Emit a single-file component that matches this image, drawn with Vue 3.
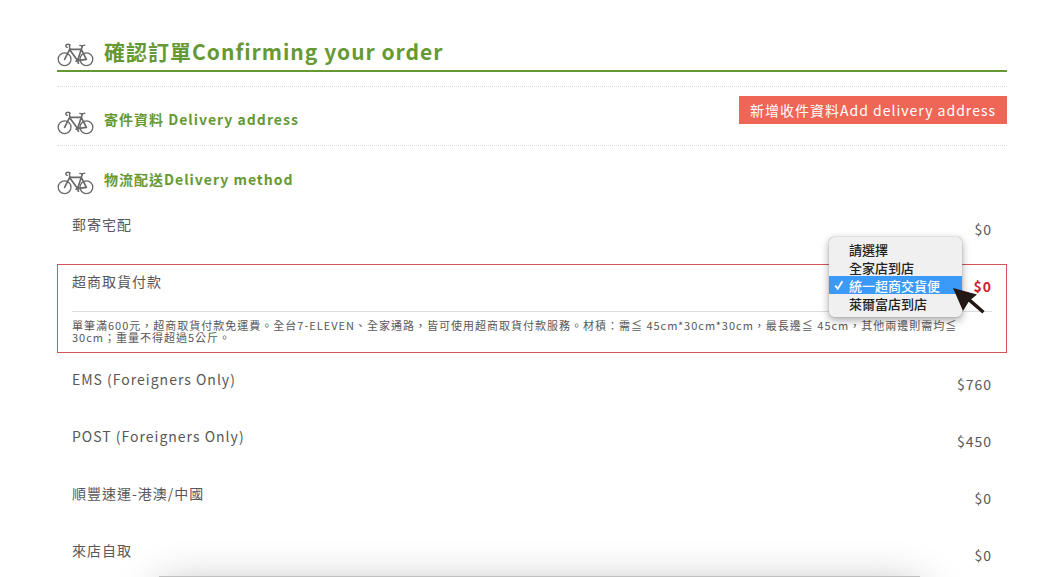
<script setup>
import { computed, ref } from 'vue'

const storeOptions = ['請選擇', '全家店到店', '統一超商交貨便', '萊爾富店到店']
const store = ref('統一超商交貨便')
const optionHeight = 18

const checkTop = computed(() => storeOptions.indexOf(store.value) * optionHeight + 'px')

const methods = [
  { name: '郵寄宅配', price: '$0' },
  {
    name: '超商取貨付款',
    price: '$0',
    active: true,
    note: '單筆滿600元，超商取貨付款免運費。全台7-ELEVEN、全家通路，皆可使用超商取貨付款服務。材積：需≦ 45cm*30cm*30cm，最長邊≦ 45cm，其他兩邊則需均≦ 30cm；重量不得超過5公斤。',
  },
  { name: 'EMS (Foreigners Only)', price: '$760' },
  { name: 'POST (Foreigners Only)', price: '$450' },
  { name: '順豐速運-港澳/中國', price: '$0' },
  { name: '來店自取', price: '$0' },
]
</script>

<template>
  <main class="checkout">
    <!-- Shared bicycle drawing -->
    <svg class="sprite" aria-hidden="true">
      <symbol id="bike" viewBox="0 0 37 24">
        <g fill="none" stroke="#6a6a6c" stroke-linecap="round" stroke-linejoin="round">
          <circle cx="7.6" cy="16.3" r="6.4" stroke-width="1.3" />
          <circle cx="29.4" cy="16.3" r="6.4" stroke-width="1.3" />
          <path d="M7.6 16.3 12.9 5.8M13.2 6.4H24.4M13.2 7.4 20.6 17.6M25.2 3.4 20.6 17.6M24.4 6.6 29.4 16.3 20.6 17.6" stroke-width="1.7" />
          <path d="M12.9 5.8 12.4 2.6M9.2 1.8C11 .8 13.4 1.4 13 2.6M9.2 1.8C8.2 3 9 4.4 10.4 4.4M22.8 2.4C24.4 3.2 26 2.8 27.8 2.2" stroke-width="1.4" />
          <path d="M19.2 18.2 22 17M20.6 17.6 21.4 20.2" stroke-width="1.8" />
        </g>
      </symbol>
    </svg>

    <header class="page-head">
      <svg class="bike" aria-hidden="true"><use href="#bike" /></svg>
      <h1>確認訂單Confirming your order</h1>
    </header>

    <section class="section address">
      <svg class="bike" aria-hidden="true"><use href="#bike" /></svg>
      <h2>寄件資料 Delivery address</h2>
      <button type="button" class="btn-add">新增收件資料Add delivery address</button>
    </section>

    <section class="section">
      <svg class="bike" aria-hidden="true"><use href="#bike" /></svg>
      <h2>物流配送Delivery method</h2>
    </section>

    <ul class="methods">
      <li v-for="m in methods" :key="m.name" class="method" :class="{ active: m.active }">
        <div class="method-row">
          <span class="method-name">{{ m.name }}</span>
          <span class="method-price">{{ m.price }}</span>
        </div>
        <p v-if="m.note" class="method-note">{{ m.note }}</p>

        <!-- Opened store drop-down -->
        <div v-if="m.active" class="store-menu">
          <select v-model="store" class="store-list" size="4" aria-label="超商取貨付款">
            <option v-for="o in storeOptions" :key="o" :value="o">{{ o }}</option>
          </select>
          <div class="check-col">
            <svg class="check" :style="{ top: checkTop }" viewBox="0 0 10 18" aria-hidden="true">
              <path d="M1.2 9.6 3.8 12.8 8.4 5.2" fill="none" stroke="#fff" stroke-width="1.8" />
            </svg>
          </div>
          <svg class="pointer" viewBox="0 0 34 28" aria-hidden="true">
            <path d="M1 1 25 7.6 19.2 12.2 32.6 24 30.4 26.4 16.6 14.8 11 24Z" fill="#231815" />
          </svg>
        </div>
      </li>
    </ul>

    <div class="sheet-edge"></div>
  </main>
</template>

<style>
body {
  margin: 0;
  background: #fff;
}
</style>

<style scoped>
.checkout {
  padding: 36px 50px 0 57px;
  color: #595757;
  font-family: 'Noto Sans CJK TC', 'Noto Sans', sans-serif;
  font-size: 14px;
  line-height: 20px;
  letter-spacing: 1px;
}

.sprite {
  position: absolute;
  width: 0;
  height: 0;
}

h1,
h2 {
  margin: 0;
  color: #669933;
  font-weight: 700;
}

h1 {
  font-size: 21px;
  line-height: 30px;
}

h2 {
  font-size: 14px;
  line-height: 20px;
}

.bike {
  width: 37px;
  height: 24px;
  margin-right: 10px;
  flex-shrink: 0;
}

/* ── Headings ───────────────────────────────────────────────── */
.page-head {
  display: flex;
  height: 34px;
  margin-bottom: 14px;
  border-bottom: 2px solid #669933;
}

.page-head .bike {
  margin-top: 7px;
}

.section {
  display: flex;
  box-sizing: border-box;
  height: 60px;
  padding-top: 23px;
}

.section .bike {
  margin-top: 2px;
}

.address {
  padding-top: 22px;
  border-top: 1px dotted #d8d8d8;
  border-bottom: 1px dotted #d8d8d8;
}

.btn-add {
  height: 28px;
  margin: -13px 0 0 auto;
  padding: 0 11px;
  border: 0;
  background: #ef6657;
  color: #fff;
  font: inherit;
  letter-spacing: inherit;
}

/* ── Delivery methods ───────────────────────────────────────── */
.methods {
  margin: 1px 0 0;
  padding: 0;
  list-style: none;
}

.method {
  padding: 0 15px;
}

.method-row {
  display: flex;
  justify-content: space-between;
  box-sizing: border-box;
  height: 57px;
  padding-top: 7px;
}

.method-price {
  padding-top: 5px;
}

.method.active {
  position: relative;
  margin-bottom: 9px;
  padding: 0 14px;
  border: 1px solid #d4545c;
  border-left-color: #669933;
}

.active .method-row {
  height: 47px;
  padding-top: 6px;
  border-bottom: 1px solid #ddd;
}

.active .method-price {
  color: #d02030;
  font-weight: 700;
}

.method-note {
  margin: 0;
  padding: 7px 0 9px;
  font-size: 11px;
  line-height: 12px;
}

/* ── Store menu ─────────────────────────────────────────────── */
.store-menu {
  position: absolute;
  top: -28px;
  right: 44px;
  box-sizing: border-box;
  width: 133px;
  padding: 3px 0 5px;
  border-radius: 5px;
  background: #f0f0f0;
  box-shadow: 0 0 1px rgba(0, 0, 0, 0.5), 0 3px 8px rgba(0, 0, 0, 0.35);
}

.store-list {
  display: block;
  width: 100%;
  height: 72px;
  padding: 0;
  border: 0;
  outline: 0;
  overflow: hidden;
  background: transparent;
  color: #222;
  font-family: inherit;
  font-size: 13px;
  font-weight: 500;
  line-height: 18px;
}

.store-list option {
  box-sizing: border-box;
  height: 18px;
  min-height: 18px;
  padding: 0 0 0 20px;
  font-weight: 500;
}

.store-list option:checked {
  background: linear-gradient(#3b99f7, #3b99f7);
  -webkit-text-fill-color: #fff;
}

.check-col {
  position: absolute;
  top: 3px;
  left: 5px;
  pointer-events: none;
}

.check {
  position: absolute;
  left: 0;
  width: 10px;
  height: 18px;
}

.pointer {
  position: absolute;
  top: 50px;
  right: -24px;
  width: 34px;
  height: 28px;
  pointer-events: none;
}

/* Top edge of the panel that rises over the page */
.sheet-edge {
  position: fixed;
  top: calc(100vh - 1px);
  left: 15%;
  right: 13%;
  height: 40px;
  background: #c0c0c0;
  box-shadow: 0 10px 44px rgba(0, 0, 0, 0.3);
}
</style>
